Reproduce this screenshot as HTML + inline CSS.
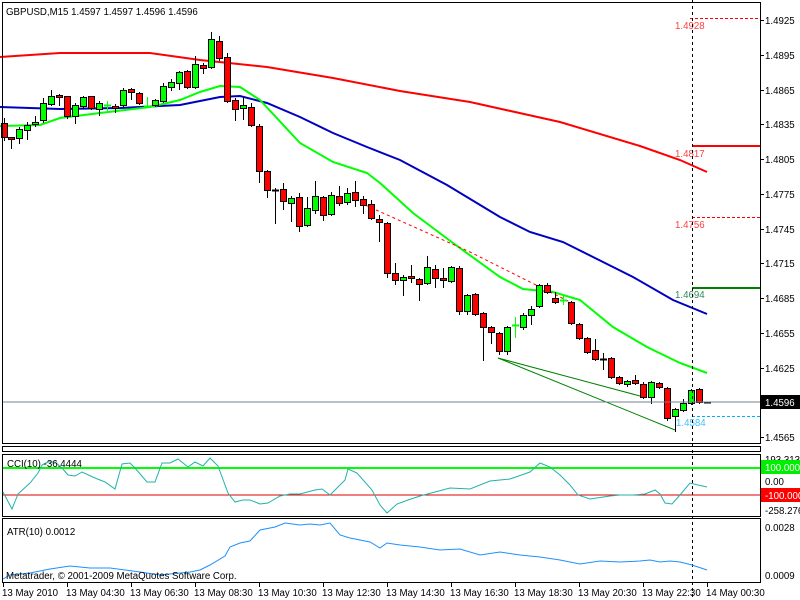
<!DOCTYPE html>
<html><head><meta charset="utf-8"><style>
html,body{margin:0;padding:0;background:#fff;width:800px;height:600px;overflow:hidden}
svg{display:block}
text{font-family:"Liberation Sans","DejaVu Sans",sans-serif;font-size:9.7px}
</style></head><body>
<svg id="s" width="800" height="600" xmlns="http://www.w3.org/2000/svg" shape-rendering="crispEdges">
<rect width="800" height="600" fill="#fff"/>
<g id="ma" fill="none" stroke-width="2" shape-rendering="auto">
<polyline stroke="#ff0000" points="0,57 60,53 150,53 200,60 267,67 333,78 400,91 470,102 560,122 640,146 680,160 707,172"/>
<polyline stroke="#0000c0" points="0,107 60,109 120,108 180,105 220,97 240,96 267,103 300,117 333,133 367,147 400,160 447,185 500,217 530,232 563,242 593,257 633,277 673,300 707,314"/>
<polyline stroke="#00ff00" points="0,126 40,125 60,118 100,113 150,107 180,100 200,92 220,86 240,87 260,100 300,143 333,162 367,173 380,183 413,213 453,243 500,277 523,289 553,292 580,300 613,327 647,347 680,363 707,373"/>
</g>
<g shape-rendering="auto">
<polyline fill="none" stroke="#ff0000" stroke-width="1" stroke-dasharray="3,3" points="365,205 470,252 570,302"/>
<polyline fill="none" stroke="#008000" stroke-width="1" points="498,358 640,396"/>
<polyline fill="none" stroke="#008000" stroke-width="1" points="498,358 675,430"/>
</g>
<g id="c"></g>
<line x1="2" y1="402" x2="760" y2="402" stroke="#708090"/>
<line x1="690" y1="18.5" x2="760" y2="18.5" stroke="#ff0000" stroke-dasharray="3,2"/>
<line x1="692" y1="146" x2="760" y2="146" stroke="#ff0000" stroke-width="2"/>
<line x1="692" y1="217.5" x2="760" y2="217.5" stroke="#ff0000" stroke-dasharray="3,2"/>
<line x1="692" y1="288" x2="760" y2="288" stroke="#008000" stroke-width="2"/>
<line x1="692" y1="416.5" x2="760" y2="416.5" stroke="#00b0ff" stroke-dasharray="3,2"/>
<text x="675" y="29" fill="#ff4040">1.4928</text>
<text x="675" y="157" fill="#ff4040">1.4817</text>
<text x="675" y="228" fill="#ff4040">1.4756</text>
<text x="675" y="298" fill="#2e8b57">1.4694</text>
<text x="676" y="426" fill="#40c0ff">1.4584</text>
<line x1="692.5" y1="0" x2="692.5" y2="600" stroke="#000" stroke-dasharray="3,3"/>
<text x="6" y="15" fill="#000">GBPUSD,M15  1.4597 1.4597 1.4596 1.4596</text>
<g fill="none" stroke="#000">
<rect x="2.5" y="2.5" width="758" height="441"/>
<rect x="2.5" y="446.5" width="758" height="5"/>
<rect x="2.5" y="454.5" width="758" height="62"/>
<rect x="2.5" y="518.5" width="758" height="64"/>
</g>
<line x1="3" y1="468" x2="760" y2="468" stroke="#00ff00" stroke-width="2"/>
<line x1="3" y1="495" x2="760" y2="495" stroke="#e00000"/>
<polyline fill="none" stroke="#20b2aa" shape-rendering="auto" points="3,492 12,509 18,494 30,483 38,473 42,465 48,462 55,462 62,468 68,475 75,476 82,472 95,478 105,482 115,489 122,464 130,463 135,468 147,482 155,482 162,463 170,463 178,459 188,467 195,462 203,466 210,458 218,466 228,493 235,502 243,500 250,500 260,504 268,503 280,496 290,494 300,494 315,490 322,489 330,495 345,480 348,469 357,473 372,490 380,505 387,513 397,504 408,500 420,496 450,488 470,489 490,481 510,479 530,472 540,463 550,467 560,475 570,485 578,495 590,499 610,496 620,495 633,495 645,494 655,490 660,494 665,503 672,504 680,495 690,483 698,485 707,487"/>
<polyline fill="none" stroke="#1e90ff" shape-rendering="auto" points="3,579 10,575 30,573 50,569 70,566 80,567 90,568 110,568 140,572 160,575 190,572 200,570 210,565 225,556 230,547 240,543 250,541 260,530 275,527 285,523 300,525 310,524 320,525 330,523 340,535 350,538 370,542 380,548 387,543 400,545 420,547 440,550 460,549 480,555 500,552 520,555 540,557 560,560 580,564 600,561 620,562 640,561 650,560 660,562 670,561 680,562 692,565 707,570"/>
<text x="7" y="467" fill="#000">CCI(10) -36.4444</text>
<text x="7" y="535" fill="#000">ATR(10) 0.0012</text>
<text x="6" y="579" fill="#000">Metatrader, © 2001-2009 MetaQuotes Software Corp.</text>
<g id="ax"></g>
<rect x="761" y="395" width="39" height="14" fill="#000"/>
<text x="765" y="406" fill="#fff">1.4596</text>
<text x="765" y="463" fill="#000">193.3133</text>
<rect x="761" y="460" width="39" height="14" fill="#00ee00"/>
<text x="765" y="471" fill="#fff">100.000</text>
<text x="765" y="485" fill="#000">0.00</text>
<rect x="761" y="488" width="39" height="14" fill="#ff0000"/>
<text x="765" y="499" fill="#fff">-100.000</text>
<text x="765" y="514" fill="#000">-258.276</text>
<text x="765" y="531" fill="#000">0.0028</text>
<text x="765" y="579" fill="#000">0.0009</text>
</svg>
<script>
var d=[[4,'r',123,137,118,140],[11,'r',137,139,137,148],[19,'g',129,138,127,143],[27,'g',125,130,122,139],[35,'g',122,124,116,126],[43,'g',103,120,98,122],[51,'g',96,104,90,105],[59,'r',95,97,94,105],[67,'r',96,116,96,118],[75,'g',105,116,103,123],[83,'g',97,106,96,108],[91,'r',96,108,96,109],[99,'g',103,109,101,115],[107,'dg',105,105,101,110],[115,'r',106,108,104,112],[123,'g',90,105,88,106],[131,'r',89,92,88,99],[139,'r',93,103,92,104],[147,'dg',106,106,97,107],[155,'g',100,105,99,106],[163,'g',86,101,83,102],[171,'g',82,87,79,90],[179,'g',72,83,71,89],[187,'r',71,87,70,88],[195,'g',64,87,56,88],[203,'r',65,68,63,73],[211,'g',39,67,32,68],[219,'r',41,58,36,60],[227,'r',57,101,53,102],[235,'r',100,109,98,120],[243,'g',105,108,97,119],[251,'r',107,125,103,126],[259,'r',126,171,124,182],[267,'r',171,190,170,197],[275,'d',190,190,188,223],[283,'r',189,201,183,209],[291,'g',198,203,196,221],[299,'r',197,226,193,231],[307,'g',208,225,197,226],[315,'g',196,210,181,213],[323,'r',197,215,196,220],[331,'g',195,214,192,215],[339,'r',196,203,186,205],[347,'g',193,202,188,204],[355,'r',192,200,181,206],[363,'r',199,205,196,213],[371,'r',204,218,200,219],[379,'r',219,222,215,241],[387,'r',223,273,222,277],[395,'r',273,280,263,284],[403,'g',277,280,275,295],[411,'r',276,278,265,282],[419,'r',279,284,278,300],[427,'g',267,283,256,284],[435,'r',269,278,265,287],[443,'r',278,280,268,287],[451,'g',267,281,266,282],[459,'r',268,311,266,314],[467,'g',295,311,294,314],[475,'r',294,314,293,315],[483,'r',313,327,312,360],[491,'r',327,332,326,343],[499,'r',333,351,332,354],[507,'g',327,351,326,354],[515,'dg',325,325,317,337],[523,'g',315,327,313,329],[531,'g',309,315,306,324],[539,'g',285,306,284,307],[547,'r',285,292,283,293],[555,'r',298,302,292,303],[563,'dg',300,300,296,304],[571,'r',302,323,301,324],[579,'r',324,338,323,339],[587,'r',338,352,337,353],[595,'r',350,359,339,360],[603,'d',359,359,353,369],[611,'r',358,377,357,378],[619,'r',377,383,376,384],[627,'g',381,384,380,386],[635,'r',380,383,375,384],[643,'r',384,397,382,398],[651,'g',382,397,381,403],[659,'r',383,387,382,388],[667,'r',388,418,387,420],[675,'g',409,416,408,431],[683,'g',403,410,399,411],[691,'g',390,403,389,404],[699,'r',389,402,388,403],[707,'d',402,402,402,402]];
var h='';
d.forEach(function(c){var x=c[0],t=c[1];
if(t[0]=='d'){var col=t=='dg'?'#00ff00':'#000';
h+='<line x1="'+(x+.5)+'" y1="'+c[4]+'" x2="'+(x+.5)+'" y2="'+(c[5]+1)+'" stroke="'+col+'"/>';
h+='<line x1="'+(x-3)+'" y1="'+(c[2]+.5)+'" x2="'+(x+4)+'" y2="'+(c[2]+.5)+'" stroke="'+col+'" stroke-width="2"/>';}
else{h+='<line x1="'+(x+.5)+'" y1="'+c[4]+'" x2="'+(x+.5)+'" y2="'+(c[5]+1)+'" stroke="#000"/>';
h+='<rect x="'+(x-2.5)+'" y="'+(c[2]+.5)+'" width="6" height="'+Math.max(2,c[3]-c[2])+'" fill="'+(t=='r'?'#ff0000':'#00ff00')+'" stroke="#000"/>';}});
document.getElementById('c').innerHTML=h;
var a='';
var pl=['1.4925','1.4895','1.4865','1.4835','1.4805','1.4775','1.4745','1.4715','1.4685','1.4655','1.4625'];
pl.forEach(function(p,i){var y=Math.round(20+i*34.75);a+='<line x1="760" y1="'+y+'.5" x2="764" y2="'+y+'.5" stroke="#000"/><text x="765" y="'+(y+4)+'" fill="#000">'+p+'</text>';});
a+='<line x1="760" y1="437.5" x2="764" y2="437.5" stroke="#000"/><text x="765" y="441" fill="#000">1.4565</text>';
var tl=['13 May 2010','13 May 04:30','13 May 06:30','13 May 08:30','13 May 10:30','13 May 12:30','13 May 14:30','13 May 16:30','13 May 18:30','13 May 20:30','13 May 22:30','14 May 00:30'];
tl.forEach(function(t,i){var x=3+i*64;if(i==11)x=707;a+='<line x1="'+(x+.5)+'" y1="583" x2="'+(x+.5)+'" y2="587" stroke="#000"/><text x="'+(x-1)+'" y="596" fill="#000">'+t+'</text>';});
document.getElementById('ax').innerHTML=a;
</script>
</body></html>
